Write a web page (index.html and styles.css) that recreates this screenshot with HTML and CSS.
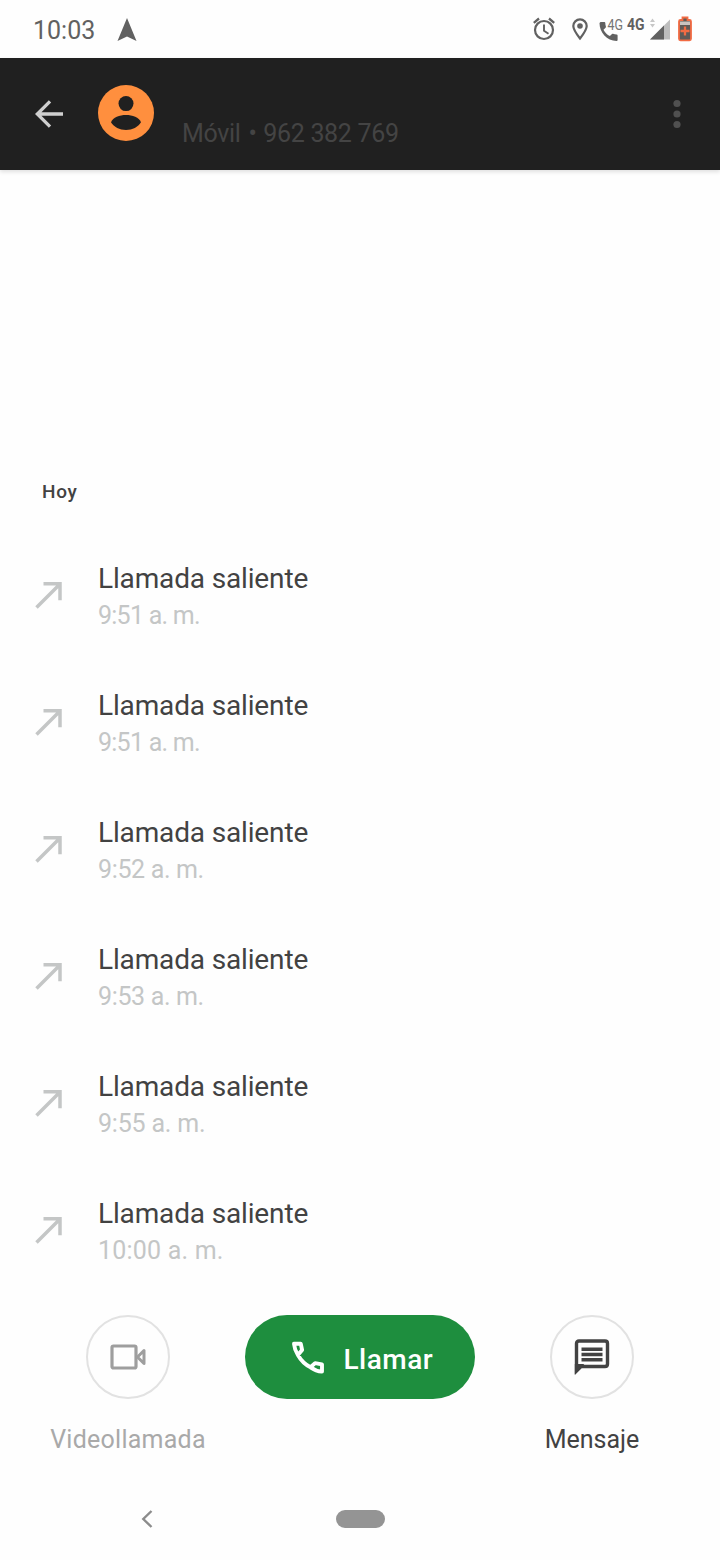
FILE: index.html
```
<!DOCTYPE html>
<html lang="es">
<head>
<meta charset="utf-8">
<title>Llamadas</title>
<link rel="stylesheet" href="styles.css">
</head>
<body>
<div class="screen">
  <div class="status">
    <span class="clock">10:03</span>
    <svg class="nav-arrow" width="20" height="24" viewBox="0 0 20 24"><path d="M10 0 19.500 23 10 18.500.5 23z" fill="#616161"/></svg>
    <svg class="indicators" width="170" height="30" viewBox="530 14 170 30">
      <g fill="none" stroke="#616161">
        <circle cx="544" cy="30" r="9" stroke-width="2.200"/>
        <path d="M544 24.500v6.300l4.500 3" stroke-width="1.900"/>
        <path d="M533.800 22.800l5.200-4.300M554.200 22.800l-5.200-4.300" stroke-width="2.300"/>
        <path d="M580 38.500c-4-5-6.700-8.500-6.700-12.400a6.700 6.700 0 0 1 13.400 0c0 3.900-2.700 7.400-6.700 12.400z" stroke-width="2.200"/>
      </g>
      <circle cx="580" cy="26" r="2.800" fill="#616161"/>
      <path d="M600.500 22h3.800q1 0 1 1c0 1.300.2 2.500.6 3.600q.2.600-.3 1.100l-2.100 2.100c1.500 2.900 3.600 4.900 6.400 6.300l2.100-2.100q.4-.4 1-.2c1.200.4 2.400.6 3.600.6q1 0 1 1V40q0 1-1 1c-9.800 0-17.100-8.500-17.100-18z" fill="#616161"/>
      <text class="network" x="607.500" y="30" textLength="15.500" lengthAdjust="spacingAndGlyphs">4G</text>
      <text class="network network-data" x="627" y="30" textLength="17.500" lengthAdjust="spacingAndGlyphs">4G</text>
      <path d="M650 22 652.500 18.500l2.500 3.500zM650 24h5l-2.500 3.500z" fill="#c7c7c7"/>
      <path d="M670 19.500v20h-20z" fill="#bdbdbd"/>
      <path d="M664 25.500v14h-14z" fill="#616161"/>
      <path d="M680.500 20h2v-2.500h5v2.500h2q1.500 0 1.500 1.500v17.300q0 1.500-1.500 1.500h-9q-1.500 0-1.500-1.500V21.500q0-1.500 1.500-1.500z" fill="#5f5a57" stroke="#f26b43" stroke-width="1.800"/>
      <path d="M680 21.500h10v3.500h-10z" fill="#c9c4c1"/>
      <path d="M685 26.500v9M680.500 31h9" stroke="#f26b43" stroke-width="2.300"/>
    </svg>
  </div>

  <header class="appbar">
    <svg class="back" width="28" height="28" viewBox="0 0 28 28"><path d="M28 14H3M15 1.300 2.300 14 15 26.700" fill="none" stroke="#cfcfcf" stroke-width="3.300"/></svg>
    <svg class="avatar" width="56" height="56" viewBox="0 0 56 56">
      <circle cx="28" cy="28" r="28" fill="#ff8f3e"/>
      <circle cx="28" cy="18.600" r="7.500" fill="#202020"/>
      <path d="M13 37.300C15 32.300 21.500 30 28 30s13 2.300 15 7.300C40 42.200 34.500 45 28 45s-12-2.800-15-7.700z" fill="#202020"/>
    </svg>
    <span class="number">Móvil <span class="dot">•</span> 962 382 769</span>
    <svg class="more" width="8" height="30" viewBox="0 0 8 30" fill="#505050"><circle cx="4" cy="4.500" r="3.600"/><circle cx="4" cy="15" r="3.600"/><circle cx="4" cy="25.500" r="3.600"/></svg>
  </header>

  <main class="history">
    <h2 class="day">Hoy</h2>
    <div class="call">
      <svg class="outgoing" width="28" height="28" viewBox="0 0 28 28"><path d="M1.500 26.500 25 3M8.500 2.700h16.500v16.500" /></svg>
      <div><div class="kind">Llamada saliente</div><div class="time t951">9:51 a. m.</div></div>
    </div>
    <div class="call">
      <svg class="outgoing" width="28" height="28" viewBox="0 0 28 28"><path d="M1.500 26.500 25 3M8.500 2.700h16.500v16.500" /></svg>
      <div><div class="kind">Llamada saliente</div><div class="time t951">9:51 a. m.</div></div>
    </div>
    <div class="call">
      <svg class="outgoing" width="28" height="28" viewBox="0 0 28 28"><path d="M1.500 26.500 25 3M8.500 2.700h16.500v16.500" /></svg>
      <div><div class="kind">Llamada saliente</div><div class="time">9:52 a. m.</div></div>
    </div>
    <div class="call">
      <svg class="outgoing" width="28" height="28" viewBox="0 0 28 28"><path d="M1.500 26.500 25 3M8.500 2.700h16.500v16.500" /></svg>
      <div><div class="kind">Llamada saliente</div><div class="time">9:53 a. m.</div></div>
    </div>
    <div class="call">
      <svg class="outgoing" width="28" height="28" viewBox="0 0 28 28"><path d="M1.500 26.500 25 3M8.500 2.700h16.500v16.500" /></svg>
      <div><div class="kind">Llamada saliente</div><div class="time t955">9:55 a. m.</div></div>
    </div>
    <div class="call">
      <svg class="outgoing" width="28" height="28" viewBox="0 0 28 28"><path d="M1.500 26.500 25 3M8.500 2.700h16.500v16.500" /></svg>
      <div><div class="kind">Llamada saliente</div><div class="time t1000">10:00 a. m.</div></div>
    </div>
  </main>

  <div class="actions">
    <div class="action">
      <div class="round">
        <svg width="36" height="36" viewBox="0 0 36 36" fill="none" stroke="#9e9e9e" stroke-width="3.200" stroke-linejoin="round"><rect x="2" y="7" width="24" height="22" rx="1.500"/><path d="M27.500 18l6.500-6.500v13z" stroke-width="3"/></svg>
      </div>
      <span class="label muted">Videollamada</span>
    </div>
    <div class="call-button">
      <svg width="34" height="34" viewBox="0 0 34 34" fill="none" stroke="#fff" stroke-width="3.900" stroke-linejoin="round"><path d="M3 2.800h6.800l1.300 6.200-4.200 5C4.800 10.500 3.300 6.500 3 2.800zM19.500 26.300l4.600-4.200 6.900 1.300v7.200c-4.200-.3-8-1.800-11.500-4.300zM6.900 14c3 5.300 7.300 9.600 12.600 12.300"/></svg>
      <span>Llamar</span>
    </div>
    <div class="action">
      <div class="round">
        <svg width="36" height="36" viewBox="0 0 36 36"><path d="M2.500 32V4.500q0-2.500 2.500-2.500h26Q33.500 2 33.500 4.500V25q0 2.500-2.500 2.500H7z" fill="none" stroke="#424242" stroke-width="3.400"/><path d="M.8 35V25h9.500z" fill="#424242"/><path d="M7.500 10.300h21M7.500 15.500h21M7.500 20.800h21" stroke="#424242" stroke-width="3.500"/></svg>
      </div>
      <span class="label">Mensaje</span>
    </div>
  </div>

  <div class="system-nav">
    <svg width="12" height="18" viewBox="0 0 12 18"><path d="M10.500 1 2.300 9l8.200 8" fill="none" stroke="#8c8c8c" stroke-width="2.400"/></svg>
    <div class="pill"></div>
  </div>
</div>
</body>
</html>
```
FILE: styles.css
```
* { box-sizing: border-box; }
body {
  margin: 0;
  background: #fefefe;
  font-family: Roboto, "Noto Sans", sans-serif;
}
svg { display: block; flex: none; }
.screen {
  width: 720px;
  height: 1560px;
  display: flex;
  flex-direction: column;
  overflow: hidden;
}
.status {
  height: 58px;
  display: flex;
  align-items: center;
  padding: 2px 20px 0 33px;
}
.clock {
  width: 84px;
  padding-top: 2px;
  font-size: 25px;
  line-height: 30px;
  color: #616161;
}
.nav-arrow { margin-top: -1px; }
.indicators { margin: -2px 0 0 auto; }
.network { font-size: 15.500px; fill: #757575; }
.network-data { font-size: 17px; font-weight: 700; fill: #616161; }

.appbar {
  height: 112px;
  display: flex;
  align-items: flex-start;
  padding: 27px 39px 0 35px;
  background: #202020;
  box-shadow: 0 2px 4px rgba(0, 0, 0, .12);
}
.back { margin-top: 15px; }
.avatar { margin-left: 35px; }
.number {
  margin: 34px 0 0 28px;
  font-size: 25px;
  line-height: 30px;
  letter-spacing: -.33px;
  color: #444;
  white-space: nowrap;
}
.dot { padding: 0 1px 0 2px; }
.more { margin: 14px 0 0 auto; }

.history {
  height: 1122px;
  padding-top: 310px;
}
.day {
  margin: 0 0 46px 42px;
  font-size: 19px;
  font-weight: 500;
  line-height: 24px;
  letter-spacing: .7px;
  color: #424242;
}
.call {
  height: 127px;
  display: flex;
  gap: 35px;
  padding: 12px 0 0 35px;
}
.outgoing {
  margin-top: 19px;
  fill: none;
  stroke: #c4c6c6;
  stroke-width: 3.500;
}
.kind {
  font-size: 28px;
  line-height: 34px;
  letter-spacing: -.15px;
  color: #424242;
}
.time {
  margin-top: 5px;
  font-size: 25px;
  line-height: 30px;
  letter-spacing: -.35px;
  color: #c4c6c6;
}
.t951 { letter-spacing: -.75px; }
.t955 { letter-spacing: -.2px; }
.t1000 { letter-spacing: .2px; }

.actions {
  display: flex;
  justify-content: space-between;
  padding: 23px 29px 0 28px;
}
.action {
  width: 200px;
  display: flex;
  flex-direction: column;
  align-items: center;
  gap: 26px;
}
.action:last-child { width: 198px; }
.round {
  width: 84px;
  height: 84px;
  display: grid;
  place-items: center;
  border: 2px solid #e2e2e2;
  border-radius: 50%;
}
.label {
  font-size: 25px;
  line-height: 30px;
  color: #424242;
}
.muted { color: #a9a9a9; letter-spacing: .25px; }
.call-button {
  width: 230px;
  height: 84px;
  display: flex;
  align-items: center;
  margin-left: -2px;
  padding: 1px 0 0 46px;
  gap: 19px;
  border-radius: 42px;
  background: #1e8e3e;
  color: #fff;
  font-size: 28px;
  font-weight: 500;
  letter-spacing: .5px;
}
.call-button span { padding-top: 3px; }
.system-nav {
  display: flex;
  align-items: center;
  gap: 183px;
  padding: 55px 0 0 141px;
}
.pill {
  width: 49px;
  height: 18px;
  border-radius: 9px;
  background: #949494;
}
```
